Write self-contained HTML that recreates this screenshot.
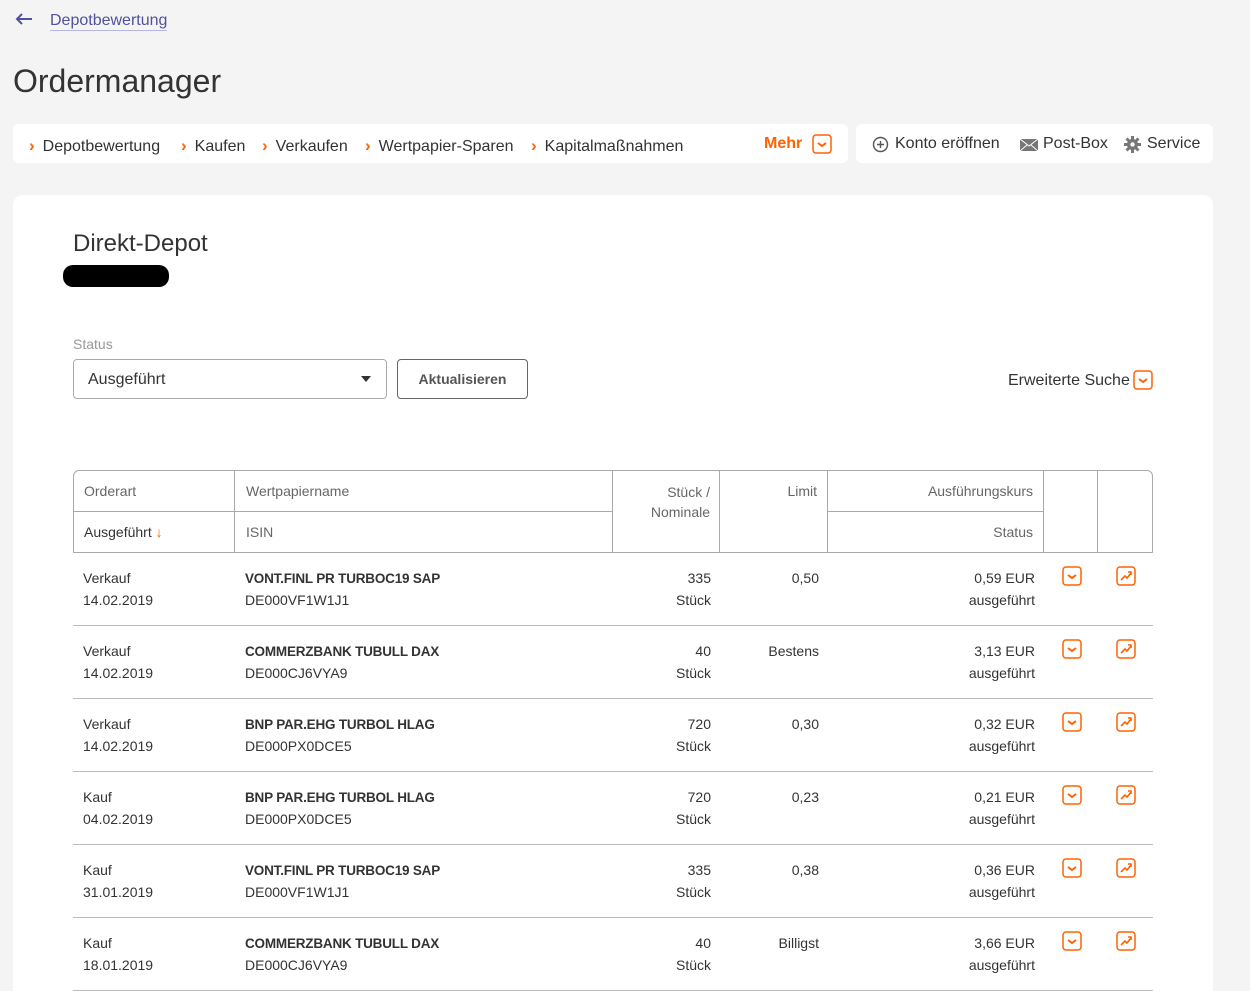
<!DOCTYPE html>
<html><head><meta charset="utf-8"><style>
*{margin:0;padding:0;box-sizing:border-box}
html,body{width:1250px;height:991px;overflow:hidden}
body{background:#f4f4f4;font-family:"Liberation Sans",sans-serif;color:#333;position:relative}
.a{position:absolute;white-space:nowrap}
.nav{position:absolute;background:#fff;border-radius:6px}
.chev{color:#ff6200;font-weight:bold;font-size:17px;margin-right:8px}
.ni{position:absolute;top:136px;font-size:16px;color:#333}
.card{position:absolute;left:13px;top:195px;width:1200px;height:796px;background:#fff;border-radius:10px 10px 0 0}
.hl{position:absolute;background:#aaa}
.t{position:absolute;font-size:14px;color:#333;white-space:nowrap}
.h{color:#666}
.b{font-weight:bold;font-size:13.5px;letter-spacing:-.2px}
.r{text-align:right}
</style></head><body>
<svg class="a" style="left:15px;top:13px" width="18" height="12"><path d="M17 6H3M7 1L2 6l5 5" fill="none" stroke="#525199" stroke-width="2"/></svg>
<div class="a" style="left:50px;top:11px;font-size:16px;color:#525199;border-bottom:1px solid #b8b6e0;line-height:19px">Depotbewertung</div>
<div class="a" style="left:13px;top:63px;font-size:32px;color:#333">Ordermanager</div>

<div class="nav" style="left:13px;top:124px;width:835px;height:39px"></div>
<div class="nav" style="left:856px;top:124px;width:357px;height:39px"></div>
<div class="ni" style="left:29px"><span class="chev">›</span>Depotbewertung</div>
<div class="ni" style="left:181px"><span class="chev">›</span>Kaufen</div>
<div class="ni" style="left:262px"><span class="chev">›</span>Verkaufen</div>
<div class="ni" style="left:365px"><span class="chev">›</span>Wertpapier-Sparen</div>
<div class="ni" style="left:531px"><span class="chev">›</span>Kapitalmaßnahmen</div>
<div class="a" style="left:764px;top:135px;font-size:16px;color:#ff6200;font-weight:bold">Mehr</div>
<svg class="a" style="left:812px;top:134px" width="20" height="20"><rect x="1" y="1" width="18" height="18" rx="3" fill="none" stroke="#ff6200" stroke-width="1.5"/><path d="M6 9l4 3 4-3" fill="none" stroke="#ff6200" stroke-width="2"/></svg>
<svg class="a" style="left:872px;top:136px" width="17" height="17"><circle cx="8.5" cy="8.5" r="7" fill="none" stroke="#555" stroke-width="1.4"/><path d="M8.5 5v7M5 8.5h7" stroke="#555" stroke-width="1.4"/></svg>
<div class="a" style="left:895px;top:135px;font-size:16px">Konto eröffnen</div>
<svg class="a" style="left:1020px;top:139px" width="18" height="12"><rect x="0" y="0" width="18" height="12" fill="#777"/><path d="M0 0l9 7 9-7M0 12l7-6M18 12l-7-6" fill="none" stroke="#fff" stroke-width="1"/></svg>
<div class="a" style="left:1043px;top:135px;font-size:16px">Post-Box</div>
<svg class="a" style="left:1124px;top:136px" width="17" height="17"><circle cx="8.5" cy="8.5" r="5.5" fill="#777"/><g stroke="#777" stroke-width="3"><path d="M8.5 0v17M0 8.5h17M2.5 2.5l12 12M14.5 2.5l-12 12"/></g><circle cx="8.5" cy="8.5" r="2.2" fill="#fff"/></svg>
<div class="a" style="left:1147px;top:135px;font-size:16px">Service</div>

<div class="card"></div>
<div class="a" style="left:73px;top:230px;font-size:24px">Direkt-Depot</div>
<div class="a" style="left:63px;top:265px;width:106px;height:22px;background:#000;border-radius:10px"></div>
<div class="a" style="left:73px;top:336px;font-size:14px;color:#999">Status</div>
<div class="a" style="left:73px;top:359px;width:314px;height:40px;border:1px solid #aaa;border-radius:4px"></div>
<div class="a" style="left:88px;top:371px;font-size:16px">Ausgeführt</div>
<div class="a" style="left:361px;top:376px;width:0;height:0;border-left:5px solid transparent;border-right:5px solid transparent;border-top:6px solid #333"></div>
<div class="a" style="left:397px;top:359px;width:131px;height:40px;border:1px solid #666;border-radius:4px;text-align:center;line-height:38px;font-size:14px;font-weight:bold;color:#555">Aktualisieren</div>
<div class="a" style="left:1008px;top:372px;font-size:16px">Erweiterte Suche</div>
<svg class="a" style="left:1133px;top:370px" width="20" height="20"><rect x="1" y="1" width="18" height="18" rx="3" fill="none" stroke="#ff6200" stroke-width="1.5"/><path d="M6 9l4 3 4-3" fill="none" stroke="#ff6200" stroke-width="2"/></svg>

<div class="a" style="left:73px;top:470px;width:1080px;height:83px;border:1px solid #aaa;border-radius:6px 6px 0 0"></div>
<div class="hl" style="left:234px;top:471px;width:1px;height:81px"></div>
<div class="hl" style="left:612px;top:471px;width:1px;height:81px"></div>
<div class="hl" style="left:719px;top:471px;width:1px;height:81px"></div>
<div class="hl" style="left:827px;top:471px;width:1px;height:81px"></div>
<div class="hl" style="left:1043px;top:471px;width:1px;height:81px"></div>
<div class="hl" style="left:1097px;top:471px;width:1px;height:81px"></div>
<div class="hl" style="left:74px;top:511px;width:538px;height:1px"></div>
<div class="hl" style="left:828px;top:511px;width:215px;height:1px"></div>
<div class="t h" style="left:84px;top:483px">Orderart</div>
<div class="t" style="left:84px;top:524px">Ausgeführt <span style="color:#ff6200;font-weight:bold">&#8595;</span></div>
<div class="t h" style="left:246px;top:483px">Wertpapiername</div>
<div class="t h" style="left:246px;top:524px">ISIN</div>
<div class="t h r" style="left:612px;width:98px;top:482px;line-height:20px">Stück /<br>Nominale</div>
<div class="t h r" style="left:719px;width:98px;top:483px">Limit</div>
<div class="t h r" style="left:828px;width:205px;top:483px">Ausführungskurs</div>
<div class="t h r" style="left:828px;width:205px;top:524px">Status</div>

<div id="rows"></div>
<script>
var d=[["Verkauf","14.02.2019","VONT.FINL PR TURBOC19 SAP","DE000VF1W1J1","335","0,50","0,59 EUR"],
["Verkauf","14.02.2019","COMMERZBANK TUBULL DAX","DE000CJ6VYA9","40","Bestens","3,13 EUR"],
["Verkauf","14.02.2019","BNP PAR.EHG TURBOL HLAG","DE000PX0DCE5","720","0,30","0,32 EUR"],
["Kauf","04.02.2019","BNP PAR.EHG TURBOL HLAG","DE000PX0DCE5","720","0,23","0,21 EUR"],
["Kauf","31.01.2019","VONT.FINL PR TURBOC19 SAP","DE000VF1W1J1","335","0,38","0,36 EUR"],
["Kauf","18.01.2019","COMMERZBANK TUBULL DAX","DE000CJ6VYA9","40","Billigst","3,66 EUR"]];
var h="";
d.forEach(function(r,i){var y=552+i*73;var a=y+18,b=y+40;
h+='<div class="t" style="left:83px;top:'+a+'px">'+r[0]+'</div><div class="t" style="left:83px;top:'+b+'px">'+r[1]+'</div>';
h+='<div class="t b" style="left:245px;top:'+(a+1)+'px">'+r[2]+'</div><div class="t" style="left:245px;top:'+b+'px">'+r[3]+'</div>';
h+='<div class="t r" style="left:612px;width:99px;top:'+a+'px">'+r[4]+'</div><div class="t r" style="left:612px;width:99px;top:'+b+'px">Stück</div>';
h+='<div class="t r" style="left:719px;width:100px;top:'+a+'px">'+r[5]+'</div>';
h+='<div class="t r" style="left:828px;width:207px;top:'+a+'px">'+r[6]+'</div><div class="t r" style="left:828px;width:207px;top:'+b+'px">ausgeführt</div>';
h+='<svg class="a" style="left:1062px;top:'+(y+14)+'px" width="20" height="20"><rect x="1" y="1" width="18" height="18" rx="3" fill="none" stroke="#ff6200" stroke-width="1.5"/><path d="M6 9l4 3 4-3" fill="none" stroke="#ff6200" stroke-width="2"/></svg>';
h+='<svg class="a" style="left:1116px;top:'+(y+14)+'px" width="20" height="20"><rect x="1" y="1" width="18" height="18" rx="3" fill="none" stroke="#ff6200" stroke-width="1.5"/><path d="M5 14l4-4 2 2 4-5M12 6h3v3" fill="none" stroke="#ff6200" stroke-width="1.6"/></svg>';
h+='<div class="hl" style="left:73px;top:'+(y+73)+'px;width:1080px;height:1px;background:#bbb"></div>';});
document.getElementById("rows").innerHTML=h;
</script>
</body></html>
